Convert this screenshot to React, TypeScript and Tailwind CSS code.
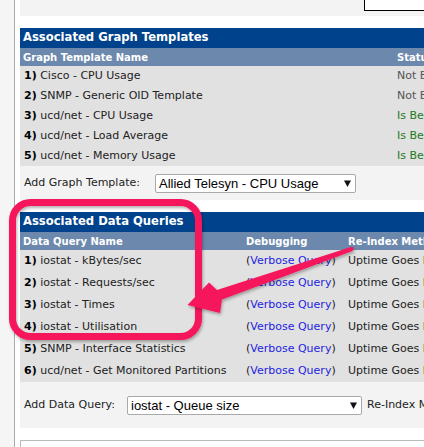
import React from 'react'

const graphTemplates = [
  { n: '1)', name: 'Cisco - CPU Usage', graphed: false },
  { n: '2)', name: 'SNMP - Generic OID Template', graphed: false },
  { n: '3)', name: 'ucd/net - CPU Usage', graphed: true },
  { n: '4)', name: 'ucd/net - Load Average', graphed: true },
  { n: '5)', name: 'ucd/net - Memory Usage', graphed: true },
]

const dataQueries = [
  { n: '1)', name: 'iostat - kBytes/sec' },
  { n: '2)', name: 'iostat - Requests/sec' },
  { n: '3)', name: 'iostat - Times' },
  { n: '4)', name: 'iostat - Utilisation' },
  { n: '5)', name: 'SNMP - Interface Statistics' },
  { n: '6)', name: 'ucd/net - Get Monitored Partitions' },
]

function Select({ value, width }: { value: string; width: string }) {
  return (
    <div
      className={`${width} h-[19px] flex items-center justify-between bg-white border border-[#a9a9a9] rounded-[2px] pl-[3px] pr-[4px] font-['Liberation_Sans',sans-serif] text-[13px] text-black leading-none`}
    >
      <span>{value}</span>
      <svg width="7" height="7" viewBox="0 0 7 7">
        <polygon points="0,0.5 7,0.5 3.5,7" fill="#111" />
      </svg>
    </div>
  )
}

export default function App() {
  return (
    <div className="relative w-[424px] h-[447px] overflow-hidden bg-white flex items-start font-['DejaVu_Sans',sans-serif] text-[11px] text-[#222]">
      {/* left frame */}
      <div className="w-[15px] h-full flex-shrink-0 bg-[#f5f5f5] border-r border-[#aaaaaa]" />
      <div className="w-[5px] h-full flex-shrink-0 bg-white" />

      <div className="w-[600px] flex-shrink-0">
        {/* top strip */}
        <div className="h-[16px] bg-[#f3f3f3] flex items-start">
          <div className="ml-[344px] w-[200px] h-[11px] bg-white border-l border-b border-black" />
        </div>
        <div className="h-[12px]" />

        {/* Graph templates */}
        <div className="h-[20px] bg-[#00438c] text-white font-bold text-[11.6px] pl-[3px] flex items-center">
          Associated Graph Templates
        </div>
        <div className="h-[18px] bg-[#6d88ad] text-white font-bold text-[10px] pl-[3px] flex items-center">
          <span className="w-[374px]">Graph Template Name</span>
          <span>Status</span>
        </div>
        <div className="bg-[#e1e1e1]">
          {graphTemplates.map((g) => (
            <div key={g.n} className="h-[20px] flex items-center pl-[4px]">
              <span className="w-[373px]">
                <b className="text-black">{g.n}</b> {g.name}
              </span>
              <span className={g.graphed ? 'text-[#1d7a1d]' : 'text-[#555]'}>
                {g.graphed ? 'Is Being Graphed' : 'Not Being Graphed'}
              </span>
            </div>
          ))}
        </div>
        <div className="h-[34px] bg-[#f3f3f3] flex items-center pl-[4px]">
          <span className="w-[131px]">Add Graph Template:</span>
          <Select value="Allied Telesyn - CPU Usage" width="w-[201px]" />
        </div>
        <div className="h-[12px]" />

        {/* Data queries */}
        <div className="h-[20px] bg-[#00438c] text-white font-bold text-[11.6px] pl-[3px] flex items-center">
          Associated Data Queries
        </div>
        <div className="h-[18px] bg-[#6d88ad] text-white font-bold text-[10px] pl-[3px] flex items-center">
          <span className="w-[223px]">Data Query Name</span>
          <span className="w-[102px]">Debugging</span>
          <span>Re-Index Method</span>
        </div>
        <div className="bg-[#e1e1e1]">
          {dataQueries.map((q) => (
            <div key={q.n} className="h-[22px] flex items-center pl-[4px]">
              <span className="w-[222px]">
                <b className="text-black">{q.n}</b> {q.name}
              </span>
              <span className="w-[102px]">
                (<span className="text-[#2424e0]">Verbose Query</span>)
              </span>
              <span>Uptime Goes Backwards</span>
            </div>
          ))}
        </div>
        <div className="h-[46px] bg-[#f3f3f3] flex items-center pl-[4px]">
          <span className="w-[103px]">Add Data Query:</span>
          <Select value="iostat - Queue size" width="w-[235px]" />
          <span className="ml-[5px]">Re-Index Method:</span>
        </div>
        <div className="h-[12px]" />
        <div className="h-[40px] border border-[#bbbbbb] bg-white" />
      </div>

      {/* annotation overlay */}
      <svg
        className="absolute left-0 top-0 pointer-events-none"
        width="424"
        height="447"
        viewBox="0 0 424 447"
      >
        <defs>
          <filter id="sh" x="-10%" y="-10%" width="120%" height="120%">
            <feDropShadow dx="1" dy="2" stdDeviation="1.5" floodColor="#000" floodOpacity="0.3" />
          </filter>
        </defs>
        <rect
          x="12.5"
          y="202.5"
          width="186"
          height="134"
          rx="18"
          fill="none"
          stroke="#f5145c"
          strokeWidth="7"
          filter="url(#sh)"
        />
        <polygon
          points="354,247.5 352.5,251 222,299.5 220,313 187.5,305 209,282.5 217,290 351,247"
          fill="#f5145c"
          filter="url(#sh)"
        />
      </svg>
    </div>
  )
}
